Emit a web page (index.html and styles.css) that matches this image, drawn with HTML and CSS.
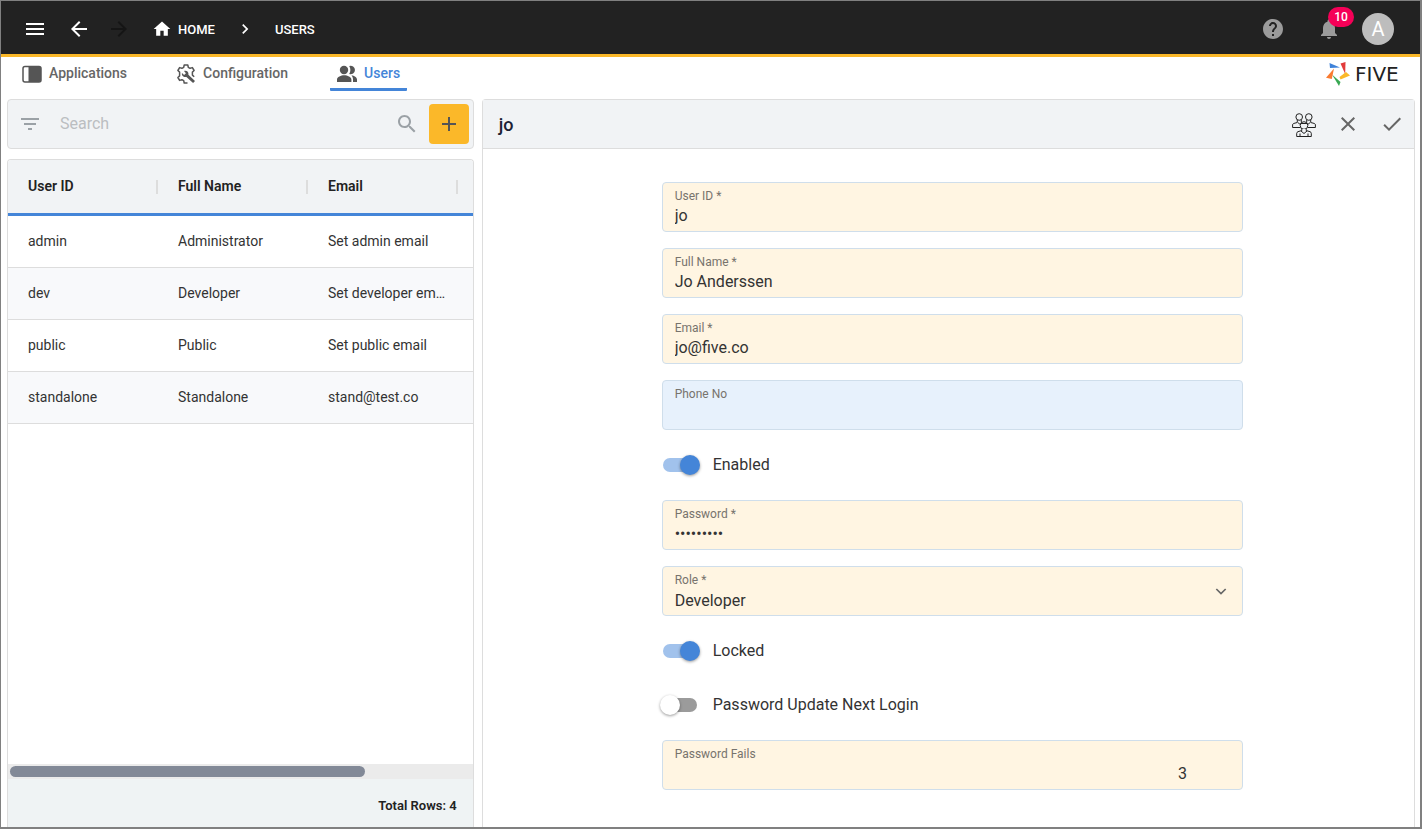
FILE: index.html
```html
<!DOCTYPE html>
<html lang="en">
<head>
<meta charset="utf-8">
<title>Five - Users</title>
<link rel="stylesheet" href="styles.css">
</head>
<body>
<div class="app">
  <header class="topbar">
    <button class="icon-btn" type="button" aria-label="Menu"><svg class="icon" viewBox="0 0 24 24"><path d="M3 18h18v-2H3v2zm0-5h18v-2H3v2zm0-7v2h18V6H3z"/></svg></button>
    <button class="icon-btn back" type="button" aria-label="Back"><svg class="icon" viewBox="0 0 24 24"><path d="M20 11H7.830l5.590-5.590L12 4l-8 8 8 8 1.410-1.410L7.830 13H20v-2z"/></svg></button>
    <button class="icon-btn forward" type="button" aria-label="Forward" disabled><svg class="icon" viewBox="0 0 24 24"><path d="M12 4l-1.410 1.410L16.170 11H4v2h12.170l-5.580 5.590L12 20l8-8z"/></svg></button>
    <nav class="crumbs" aria-label="Breadcrumb">
      <a class="crumb" href="#"><svg class="icon-small" viewBox="0 0 24 24"><path d="M10 20v-6h4v6h5v-8h3L12 3 2 12h3v8z"/></svg>HOME</a>
      <svg class="icon-small" viewBox="0 0 24 24"><path d="M10 6L8.590 7.410 13.170 12l-4.580 4.590L10 18l6-6z"/></svg>
      <a class="crumb" href="#">USERS</a>
    </nav>
    <div class="top-actions">
      <button class="icon-btn muted" type="button" aria-label="Help"><svg class="icon" viewBox="0 0 24 24"><path d="M12 2C6.480 2 2 6.480 2 12s4.480 10 10 10 10-4.480 10-10S17.520 2 12 2zm1 17h-2v-2h2v2zm2.070-7.750l-.9.920C13.450 12.900 13 13.500 13 15h-2v-.5c0-1.100.45-2.100 1.170-2.830l1.240-1.260c.37-.36.59-.86.59-1.410 0-1.100-.9-2-2-2s-2 .9-2 2H8c0-2.210 1.790-4 4-4s4 1.790 4 4c0 .88-.36 1.680-.93 2.250z"/></svg></button>
      <button class="icon-btn muted bell" type="button" aria-label="Notifications"><svg class="icon" viewBox="0 0 24 24"><path d="M12 22c1.100 0 2-.9 2-2h-4c0 1.100.89 2 2 2zm6-6v-5c0-3.070-1.640-5.640-4.500-6.320V4c0-.83-.67-1.500-1.500-1.500s-1.500.67-1.500 1.500v.68C7.630 5.360 6 7.920 6 11v5l-2 2v1h16v-1l-2-2z"/></svg><span class="badge">10</span></button>
      <button class="avatar" type="button">A</button>
    </div>
  </header>

  <nav class="tabs" aria-label="Sections">
    <a class="tab" href="#"><svg class="tab-icon" viewBox="0 0 20 20"><rect x="1" y="2.500" width="18" height="15.500" rx="2" fill="#fff" stroke="#555" stroke-width="1.500"/><path d="M6.500 2.500H17a2 2 0 0 1 2 2V16a2 2 0 0 1-2 2H6.500z"/></svg>Applications</a>
    <a class="tab" href="#"><svg class="tab-icon" viewBox="0 0 20 20"><path d="M11.500 19H8.200L7.700 16.700 5.900 15.700 3.600 16.400 1.900 13.500 3.600 11.900V8.100L1.900 6.500 3.600 3.600 5.900 4.300 7.700 3.300 8.200 1h3.600l.5 2.300 1.800 1 2.300-.7 1.700 2.900-1.700 1.600v3l1.800 1.600" fill="none" stroke="#555" stroke-width="1.500" stroke-linejoin="round"/><path d="M6 9.100 8.100 11l1.800-1.700L8 7.100c2.300-1 5 .7 4.400 3.600l6.600 6.200-1.900 2-6.700-5.900C7.500 13.600 5.200 11.500 6 9.100z"/></svg>Configuration</a>
    <a class="tab active" href="#" aria-current="page"><svg class="tab-icon" viewBox="0 0 20 20"><circle cx="7" cy="6" r="4.200"/><path d="M12.200 2.100A4.200 4.200 0 1 1 12.200 9.900C13.800 7.500 13.800 4.500 12.200 2.100z"/><path d="M0 18v-2.400c0-2.700 4-4.300 7.200-4.300s7.200 1.600 7.200 4.300V18zM14.500 11.300c2.700.4 5.500 1.900 5.500 4.300V18h-4v-2.400c0-1.800-.6-3.200-1.500-4.300z"/></svg>Users</a>
    <div class="brand">
      <svg class="brand-mark" viewBox="0 0 24 24"><path fill="#3f82d9" d="M3.500 1l10.500 4.500-10 .5z"/><path fill="#e23b3b" d="M19.500 0l-.3 12L14.500 1.500z"/><path fill="#fbb829" d="M24 13.500l-9.500 4-1-2.500L20 10z"/><path fill="#38a852" d="M6 12.500l8.500 7.500L13 24z"/><path fill="#fa7b30" d="M8 6.500L5.800 17 0 15.800z"/></svg>
      <span class="brand-name">FIVE</span>
    </div>
  </nav>

  <main class="workspace">
    <section class="list-pane" aria-label="Users">
      <form class="search">
        <svg class="icon" viewBox="0 0 24 24"><path d="M10 18h4v-2h-4v2zM3 6v2h18V6H3zm3 7h12v-2H6v2z"/></svg>
        <input class="search-input" type="search" placeholder="Search" aria-label="Search">
        <svg class="icon" viewBox="0 0 24 24"><path d="M15.500 14h-.79l-.28-.27C15.410 12.590 16 11.110 16 9.500 16 5.910 13.090 3 9.500 3S3 5.910 3 9.500 5.910 16 9.500 16c1.610 0 3.090-.59 4.230-1.570l.27.28v.79l5 4.990L20.490 19l-4.990-5zm-6 0C7.010 14 5 11.990 5 9.500S7.010 5 9.500 5 14 7.010 14 9.500 11.990 14 9.500 14z"/></svg>
        <button class="add" type="button" aria-label="Add user"><svg class="icon" viewBox="0 0 24 24"><path d="M19 13h-6v6h-2v-6H5v-2h6V5h2v6h6v2z"/></svg></button>
      </form>
      <div class="grid-card">
        <div class="grid-scroll">
          <table class="grid">
            <thead><tr><th>User ID</th><th>Full Name</th><th>Email</th><th></th></tr></thead>
            <tbody>
              <tr><td>admin</td><td>Administrator</td><td>Set admin email</td><td></td></tr>
              <tr><td>dev</td><td>Developer</td><td>Set developer email</td><td></td></tr>
              <tr><td>public</td><td>Public</td><td>Set public email</td><td></td></tr>
              <tr><td>standalone</td><td>Standalone</td><td>stand@test.co</td><td></td></tr>
            </tbody>
          </table>
        </div>
        <div class="scrollbar"><div class="thumb"></div></div>
        <div class="grid-footer">Total Rows: 4</div>
      </div>
    </section>

    <section class="detail" aria-label="User details">
      <div class="detail-head">
        <h1 class="detail-title">jo</h1>
        <button class="icon-btn group" type="button" aria-label="Groups"><svg class="icon" viewBox="0 0 24 24"><circle cx="7.200" cy="4" r="3.300"/><circle cx="16.800" cy="4" r="3.300"/><path d="M5.300 7v2.500L1.500 10.500Q.6 11 .6 12v2.500h8M18.700 7v2.500l3.800 1q.9.500.9 1.500v2.500h-8M9.300 7v2M14.700 7v2M6 9.700l2 1.600M18 9.700l-2 1.600"/><circle cx="12" cy="12.500" r="3.800"/><path d="M8.500 10.500h7M9.800 16v1.500L6 18.700q-1.300.5-1.300 1.600v3.200h14.600v-3.200q0-1.100-1.300-1.600l-3.800-1.200V16M9 18l3 2.500 3-2.500M8 20.500v3M16 20.500v3"/></svg></button>
        <button class="icon-btn" type="button" aria-label="Cancel"><svg class="icon" viewBox="0 0 24 24"><path d="M19 6.410L17.590 5 12 10.590 6.410 5 5 6.410 10.590 12 5 17.590 6.410 19 12 13.410 17.590 19 19 17.590 13.410 12z"/></svg></button>
        <button class="icon-btn" type="button" aria-label="Save"><svg class="icon" viewBox="0 0 24 24"><path d="M9 16.200L4.800 12l-1.400 1.400L9 19 21 7l-1.400-1.400L9 16.200z"/></svg></button>
      </div>
      <form class="form">
        <div class="field"><label for="uid">User ID *</label><input id="uid" type="text" value="jo"></div>
        <div class="field"><label for="name">Full Name *</label><input id="name" type="text" value="Jo Anderssen"></div>
        <div class="field"><label for="email">Email *</label><input id="email" type="text" value="jo@five.co"></div>
        <div class="field optional"><label for="phone">Phone No</label><input id="phone" type="text"></div>
        <label class="toggle"><input type="checkbox" checked><span>Enabled</span></label>
        <div class="field"><label for="pw">Password *</label><input id="pw" type="password" value="password1"></div>
        <div class="field select"><label for="role">Role *</label><select id="role"><option>Developer</option></select><svg class="chevron" viewBox="0 0 24 24"><path d="M5 9l7 7 7-7" fill="none" stroke="currentColor" stroke-width="2.500"/></svg></div>
        <label class="toggle"><input type="checkbox" checked><span>Locked</span></label>
        <label class="toggle"><input type="checkbox"><span>Password Update Next Login</span></label>
        <div class="field number"><label for="fails">Password Fails</label><input id="fails" type="text" value="3"></div>
      </form>
    </section>
  </main>
</div>
</body>
</html>
```
FILE: styles.css
```css
* { box-sizing: border-box; }
body { margin: 0; font-family: Roboto, "Liberation Sans", sans-serif; font-size: 14px; color: #333; background: #fff; }
button, input, select { font: inherit; color: inherit; margin: 0; padding: 0; border: 0; background: none; outline: 0; }
button { cursor: pointer; }
a { color: inherit; text-decoration: none; }
svg { display: block; flex: none; fill: currentColor; }

.app { display: flex; flex-direction: column; height: 100vh; overflow: hidden; border: solid #808080; border-width: 1px 2px 2px 1px; }
.icon { width: 24px; height: 24px; }
.icon-small { width: 20px; height: 20px; }
.icon-btn { display: flex; }

.topbar { display: flex; flex: none; align-items: center; height: 56px; padding: 3px 26px 0 22px; background: #222; border-bottom: 3px solid #fbb829; color: #fff; }
.back { margin-left: 20px; }
.forward { margin-left: 16px; color: #151515; }
.crumbs { display: flex; align-items: center; gap: 20px; margin-left: 21px; font-size: 13px; font-weight: 500; }
.crumb { display: flex; align-items: center; gap: 6px; }
.top-actions { display: flex; align-items: center; margin-left: auto; }
.muted { color: #9b9b9b; }
.bell { position: relative; margin: 0 21px 0 32px; }
.badge { position: absolute; left: 11px; top: -10px; width: 26px; border-radius: 10px; background: #f50057; color: #fff; font-size: 12px; font-weight: 500; line-height: 20px; text-align: center; }
.avatar { width: 32px; height: 32px; border-radius: 50%; background: #bdbdbd; color: #fff; font-size: 20px; line-height: 32px; }

.tabs { display: flex; flex: none; align-items: flex-start; gap: 35px; height: 42px; padding: 0 6px 0 14px; color: #666; font-weight: 500; }
.tab { display: flex; align-items: center; gap: 7px; height: 34px; padding: 0 7px; border-bottom: 3px solid transparent; line-height: 32px; }
.tab-icon { width: 20px; height: 20px; margin-top: 3px; color: #555; }
.active { color: #4485d8; border-color: #4485d8; border-radius: 1px; }
.brand { display: flex; align-items: center; gap: 5px; height: 34px; margin-left: auto; }
.brand-mark { width: 24px; height: 24px; }
.brand-name { width: 59px; color: #222; font: 20px "DejaVu Sans", sans-serif; }

.workspace { display: grid; flex: 1; grid-template-columns: minmax(0, 1fr) minmax(0, 2fr); gap: 8px; min-height: 0; padding: 0 5px 0 6px; }
.list-pane { display: flex; flex-direction: column; gap: 10px; min-width: 0; min-height: 0; }
.search { display: flex; align-items: center; height: 50px; padding: 0 4px 0 10px; background: #f1f3f5; border: 1px solid #ddd; border-radius: 4px; color: #9ba1a6; }
.search-input { flex: 1; min-width: 0; height: 24px; margin-left: 18px; padding-bottom: 2px; font-size: 16px; appearance: none; }
.search-input::placeholder { color: #bbbec1; opacity: 1; }
.add { display: grid; place-items: center; width: 40px; height: 40px; margin-left: 10px; border-radius: 4px; background: #fbb829; color: #555; }

.grid-card { display: flex; flex: 1; flex-direction: column; min-height: 0; border: 1px solid #ddd; border-bottom: 0; border-radius: 4px 4px 0 0; overflow: hidden; }
.grid-scroll { flex: 1; overflow: hidden; }
.grid { width: 600px; table-layout: fixed; border-collapse: separate; border-spacing: 0; }
.grid th, .grid td { padding: 0 20px 2px; text-align: left; overflow: hidden; text-overflow: ellipsis; white-space: nowrap; }
.grid th { height: 56px; background: linear-gradient(#ddd, #ddd) right 0 top 20px / 2px 14px no-repeat #f1f3f5; border-bottom: 3px solid #4485d8; color: #222; font-weight: 600; }
.grid td { height: 52px; padding-right: 8px; border-bottom: 1px solid #ddd; }
.grid tbody tr:nth-child(even) { background: #f8f9fb; }
.scrollbar { flex: none; height: 15px; padding: 2px; background: #ebebeb; }
.thumb { width: 77%; height: 11px; border-radius: 6px; background: #828997; }
.grid-footer { flex: none; height: 48px; padding-right: 16px; background: #eff3f4; color: #222; font-size: 13px; font-weight: 600; line-height: 53px; text-align: right; }

.detail { display: flex; flex-direction: column; min-width: 0; min-height: 0; border: 1px solid #ddd; border-bottom: 0; border-radius: 4px 4px 0 0; }
.detail-head { display: flex; flex: none; align-items: center; gap: 20px; height: 49px; padding: 0 10px 0 16px; background: #f1f3f5; border-bottom: 1px solid #ddd; color: #666; }
.detail-title { flex: 1; margin: 0; color: #1c2233; font-size: 18px; font-weight: 500; }
.group { padding-top: 2px; }
.group .icon { fill: #f1f3f5; stroke: #222; }

.form { display: flex; flex-direction: column; gap: 16px; padding: 33px 171px 0 179px; }
.field { position: relative; display: flex; flex-direction: column; height: 50px; padding: 5px 12px 0; background: #fff5e2; border: 1px solid #cfdeeb; border-radius: 4px; }
.field label { color: #77736d; font-size: 12px; line-height: 16px; }
.field input, .field select { width: 100%; height: 24px; font-size: 16px; line-height: 24px; appearance: none; }
.field select { height: 26px; line-height: 26px; }
.optional { background: #e7f1fc; }
.number input { padding-right: 43px; text-align: right; }
.chevron { position: absolute; right: 13px; top: 16px; width: 16px; height: 16px; color: #666; pointer-events: none; }
.toggle { display: flex; align-items: center; gap: 16px; height: 38px; padding-left: 1px; font-size: 16px; }
.toggle span { padding-bottom: 2px; }
.toggle input { position: relative; width: 34px; height: 14px; border-radius: 7px; background: #9b9b9b; appearance: none; }
.toggle input::before { content: ""; position: absolute; left: -3px; top: -3px; width: 20px; height: 20px; border-radius: 50%; background: #fff; box-shadow: 0 1px 3px #0006; }
.toggle input:checked { background: #a1c2ec; }
.toggle input:checked::before { left: 17px; background: #4485d8; }
```
